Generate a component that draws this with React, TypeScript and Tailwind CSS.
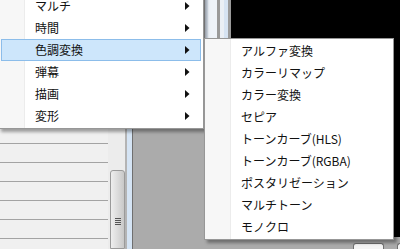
import { FC } from 'react'

const font = { fontFamily: '"Noto Sans CJK JP", "Noto Sans", sans-serif' }

type Item = { label: string, sub?: boolean, active?: boolean }

const mainItems: Item[] = [
  { label: 'マルチ', sub: true },
  { label: '時間', sub: true },
  { label: '色調変換', sub: true, active: true },
  { label: '弾幕', sub: true },
  { label: '描画', sub: true },
  { label: '変形', sub: true },
]

const colorItems: Item[] = [
  { label: 'アルファ変換' },
  { label: 'カラーリマップ' },
  { label: 'カラー変換' },
  { label: 'セピア' },
  { label: 'トーンカーブ(HLS)' },
  { label: 'トーンカーブ(RGBA)' },
  { label: 'ポスタリゼーション' },
  { label: 'マルチトーン' },
  { label: 'モノクロ' },
]

const Arrow: FC = () => (
  <svg width="5" height="8" viewBox="0 0 5 8" className="shrink-0">
    <path d="M0 0 L4.5 4 L0 8 Z" fill="#111" />
  </svg>
)

const MenuRow: FC<{ item: Item }> = ({ item }) => (
  <div
    className={`h-[22px] mx-[2px] flex items-center pl-[33px] pr-[10px] text-[12px] text-[#111] border ${
      item.active ? 'bg-[#cde6fb] border-[#8cbdea]' : 'border-transparent'
    }`}
  >
    <span className="flex-1 whitespace-nowrap leading-none">{item.label}</span>
    {item.sub && <Arrow />}
  </div>
)

const Menu: FC<{ items: Item[], className: string }> = ({ items, className }) => (
  <div
    className={`absolute bg-white border border-[#979797] py-[1px] shadow-[3px_3px_3px_rgba(0,0,0,0.35)] ${className}`}
    style={font}
  >
    <div className="absolute left-0 top-0 bottom-0 w-[26px] bg-[#f7f7f7] border-r border-[#ececec]" />
    <div className="relative">
      {items.map((it) => <MenuRow key={it.label} item={it} />)}
    </div>
  </div>
)

const App: FC = () => {
  const rows = Array.from({ length: 13 })
  return (
    <div className="relative w-[400px] h-[249px] overflow-hidden bg-[#ababab] flex">
      {/* list panel */}
      <div className="w-[108px] bg-[#f0f0f0] pt-[11px] flex flex-col">
        {rows.map((_, i) => (
          <div key={i} className="h-[19px] shrink-0 border-b border-[#a3a3a3]" />
        ))}
      </div>

      {/* scrollbar */}
      <div className="w-[17px] bg-[#ececec] pl-[2px] pt-[170px] flex flex-col">
        <div className="flex-1 rounded-t-[3px] border border-[#9a9a9a] bg-gradient-to-r from-[#eeeeee] via-[#dcdcdc] to-[#c8c8c8] flex flex-col items-center pt-[47px] gap-[1px]">
          <div className="w-[6px] h-[1px] bg-[#555]" />
          <div className="w-[6px] h-[1px] bg-[#555]" />
          <div className="w-[6px] h-[1px] bg-[#555]" />
          <div className="w-[6px] h-[1px] bg-[#555]" />
        </div>
      </div>

      {/* splitter */}
      <div className="w-[8px] border-l-2 border-[#b4b4b4] border-r border-r-[#6f6f6f] bg-[#d5e4f4]" />

      {/* gray middle */}
      <div className="w-[72px] bg-[#ababab]" />

      {/* right panel */}
      <div className="flex-1 flex flex-col">
        <div className="h-[237px] flex">
          <div className="w-[3px] bg-[#dfe9f5]" />
          <div className="w-[9px] bg-[#eef3f9]" />
          <div className="w-[3px] bg-[#9a9a9a]" />
          <div className="w-[4px] bg-[#eaeff5]" />
          <div className="w-[4px] bg-[#d6e3f2]" />
          <div className="w-[3px] bg-[#9a9a9a]" />
          <div className="flex-1 bg-black" />
        </div>
        <div className="flex-1 bg-[#ababab] flex items-end justify-end gap-[13px]">
          <div className="w-[31px] h-[6px] rounded-t-[3px] border border-b-0 border-[#707070] bg-[#f4f4f4]" />
          <div className="w-[3px] h-[6px] rounded-tl-[3px] border border-b-0 border-r-0 border-[#707070] bg-[#f4f4f4]" />
        </div>
      </div>

      <Menu items={mainItems} className="left-[-2px] top-[-7px] w-[206px]" />
      <Menu items={colorItems} className="left-[204px] top-[38px] w-[190px]" />
    </div>
  )
}

export default App
